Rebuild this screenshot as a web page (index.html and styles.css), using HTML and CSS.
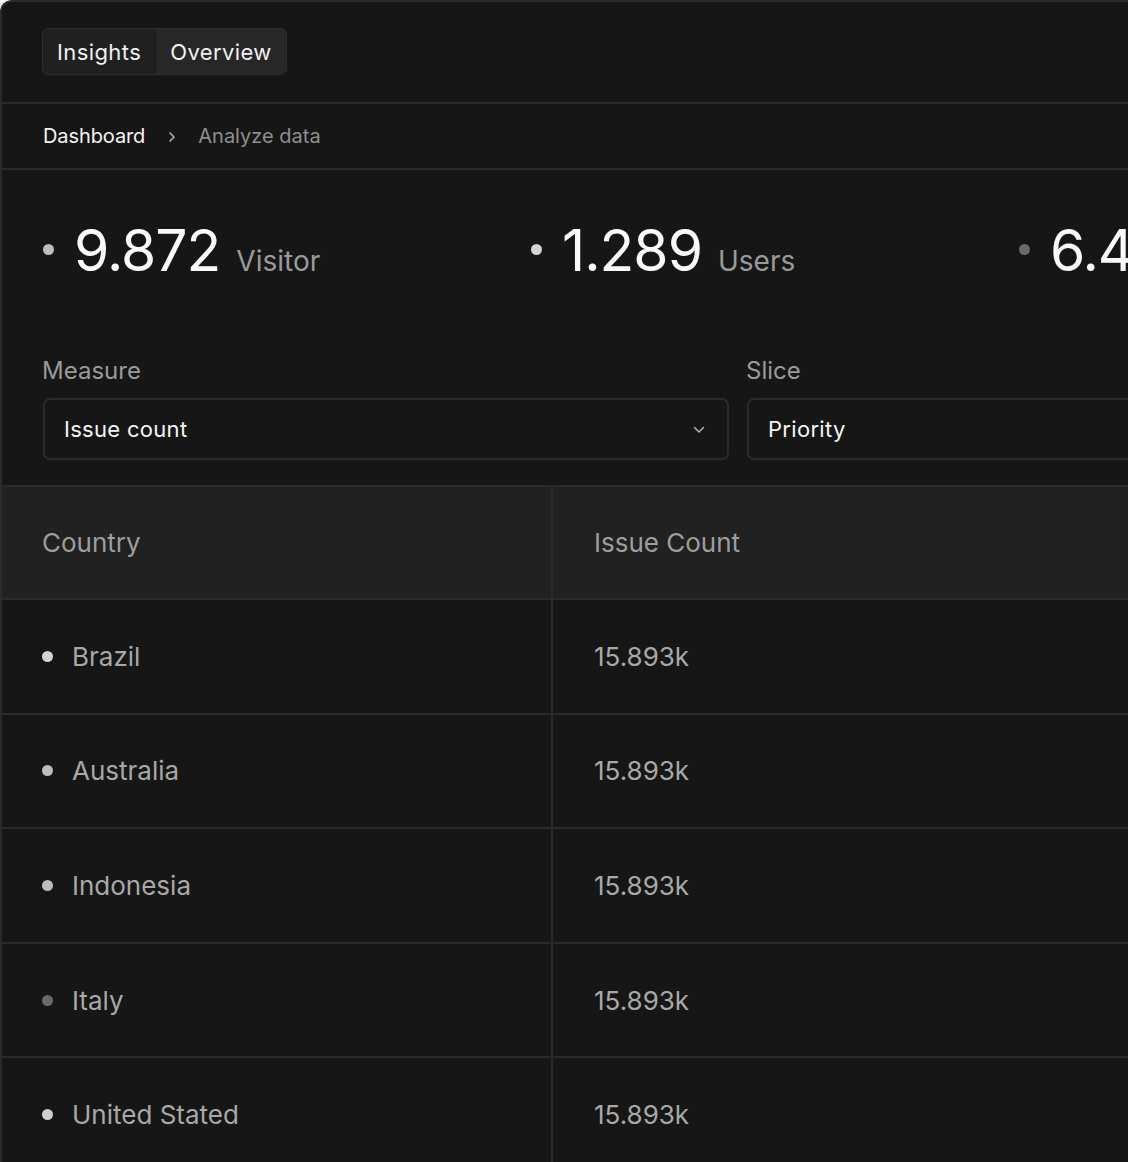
FILE: index.html
```html
<!DOCTYPE html>
<html lang="en">
<head>
<meta charset="utf-8">
<title>Analyze data</title>
<link rel="stylesheet" href="styles.css">
</head>
<body>
<div class="card">
  <header class="header">
    <div class="tabs">
      <span class="tab">Insights</span>
      <span class="tab tab-active">Overview</span>
    </div>
  </header>
  <nav class="crumbs">
    <span class="crumb-root">Dashboard</span>
    <svg class="crumb-sep" width="8" height="12" viewBox="0 0 8 12"><path d="M2 2 L6 6 L2 10" fill="none" stroke="#bdbdbd" stroke-width="1.4" stroke-linecap="round" stroke-linejoin="round"/></svg>
    <span class="crumb-current">Analyze data</span>
  </nav>
  <section class="summary">
    <div class="stats">
      <div class="stat"><span class="dot dot-b"></span><span class="stat-num">9.872</span><span class="stat-label">Visitor</span></div>
      <div class="stat"><span class="dot dot-a"></span><span class="stat-num">1.289</span><span class="stat-label">Users</span></div>
      <div class="stat"><span class="dot dot-d"></span><span class="stat-num">6.412</span><span class="stat-label">Sessions</span></div>
    </div>
    <div class="filters">
      <div class="field">
        <label class="field-label">Measure</label>
        <div class="select">
          <span>Issue count</span>
          <svg class="chev" width="12" height="8" viewBox="0 0 12 8"><path d="M1.5 1.5 L6 6 L10.5 1.5" fill="none" stroke="#b0b0b0" stroke-width="1.5" stroke-linecap="round" stroke-linejoin="round"/></svg>
        </div>
      </div>
      <div class="field">
        <label class="field-label">Slice</label>
        <div class="select">
          <span>Priority</span>
          <svg class="chev" width="12" height="8" viewBox="0 0 12 8"><path d="M1.5 1.5 L6 6 L10.5 1.5" fill="none" stroke="#b0b0b0" stroke-width="1.5" stroke-linecap="round" stroke-linejoin="round"/></svg>
        </div>
      </div>
    </div>
  </section>
  <div class="table">
    <div class="row head">
      <div class="cell">Country</div>
      <div class="cell">Issue Count</div>
    </div>
    <div class="row">
      <div class="cell"><span class="dot dot-a"></span>Brazil</div>
      <div class="cell">15.893k</div>
    </div>
    <div class="row">
      <div class="cell"><span class="dot dot-b"></span>Australia</div>
      <div class="cell">15.893k</div>
    </div>
    <div class="row">
      <div class="cell"><span class="dot dot-b"></span>Indonesia</div>
      <div class="cell">15.893k</div>
    </div>
    <div class="row">
      <div class="cell"><span class="dot dot-d"></span>Italy</div>
      <div class="cell">15.893k</div>
    </div>
    <div class="row">
      <div class="cell"><span class="dot dot-c"></span>United Stated</div>
      <div class="cell">15.893k</div>
    </div>
  </div>
</div>
</body>
</html>
```

FILE: styles.css
```css
html, body {
  margin: 0;
  padding: 0;
  background: #f2f2f2;
  overflow: hidden;
}
body {
  font-family: Inter, "Noto Sans", sans-serif;
  color: #fff;
}
.card {
  width: 1500px;
  height: 1300px;
  background: #161616;
  border-top: 2px solid #2b2b2b;
  border-left: 2px solid #2b2b2b;
  border-top-left-radius: 12px;
  box-sizing: border-box;
}
.header {
  padding: 26px 40px 27px;
  border-bottom: 2px solid #2a2a2a;
}
.tabs {
  display: inline-flex;
  height: 47px;
  box-sizing: border-box;
  border: 1.5px solid #2d2d2d;
  border-radius: 6px;
  overflow: hidden;
  background: #202020;
}
.tab {
  display: flex;
  align-items: center;
  padding: 0 14px;
  font-size: 22px;
  font-weight: 400;
  color: #f0f0f0;
  letter-spacing: 0.4px;
}
.tab-active {
  background: #272727;
  border-left: 1px solid #1c1c1c;
}
.crumbs {
  height: 64px;
  display: flex;
  align-items: center;
  padding: 0 41px;
  border-bottom: 2px solid #2a2a2a;
  font-size: 20px;
}
.crumb-root { color: #f4f4f4; letter-spacing: -0.1px; }
.crumb-sep { margin: 2px 22px 0 23px; }
.crumb-current { color: #8e8e8e; }
.summary {
  padding: 52px 40px 25px 41px;
  border-bottom: 2px solid #2a2a2a;
}
.stats {
  display: flex;
}
.stat {
  width: 488px;
  flex: none;
  display: flex;
  align-items: baseline;
}
.dot {
  display: inline-block;
  width: 11px;
  height: 11px;
  border-radius: 50%;
  flex: none;
}
.dot-a { background: #d4d4d4; }
.dot-b { background: #bdbdbd; }
.dot-c { background: #cfcfcf; }
.dot-d { background: #6a6a6a; }
.stat .dot {
  align-self: center;
  margin-right: 20px;
  margin-top: -2px;
}
.stat-num {
  font-size: 57px;
  line-height: 1;
  font-weight: 400;
  letter-spacing: -1px;
  color: #fafafa;
}
.stat-label {
  font-size: 28px;
  color: #9a9a9a;
  margin-left: 16px;
}
.filters {
  display: flex;
  gap: 18px;
  margin-top: 80px;
}
.field {
  width: 686px;
  flex: none;
}
.field-label {
  display: block;
  font-size: 24px;
  line-height: 1;
  color: #9a9a9a;
  margin-bottom: 15px;
  margin-left: -1px;
}
.select {
  height: 62px;
  box-sizing: border-box;
  border: 2px solid #2a2a2a;
  border-radius: 7px;
  display: flex;
  align-items: center;
  justify-content: space-between;
  padding: 0 22px 0 19px;
  font-size: 22px;
  color: #f4f4f4;
  letter-spacing: 0.3px;
}
.chev { margin-top: 1px; }
.table {
  display: flex;
  flex-direction: column;
}
.row {
  display: grid;
  grid-template-columns: 549px 1fr;
  height: 114.6px;
  box-sizing: border-box;
  border-bottom: 2px solid #2a2a2a;
}
.row.head {
  height: 113px;
  background: #212121;
}
.cell {
  display: flex;
  align-items: center;
  padding-left: 40px;
  font-size: 26px;
  color: #a8a8a8;
}
.row.head .cell { color: #9d9d9d; }
.cell + .cell {
  border-left: 2px solid #2a2a2a;
  padding-left: 41px;
}
.cell .dot {
  margin-right: 19px;
}
```
